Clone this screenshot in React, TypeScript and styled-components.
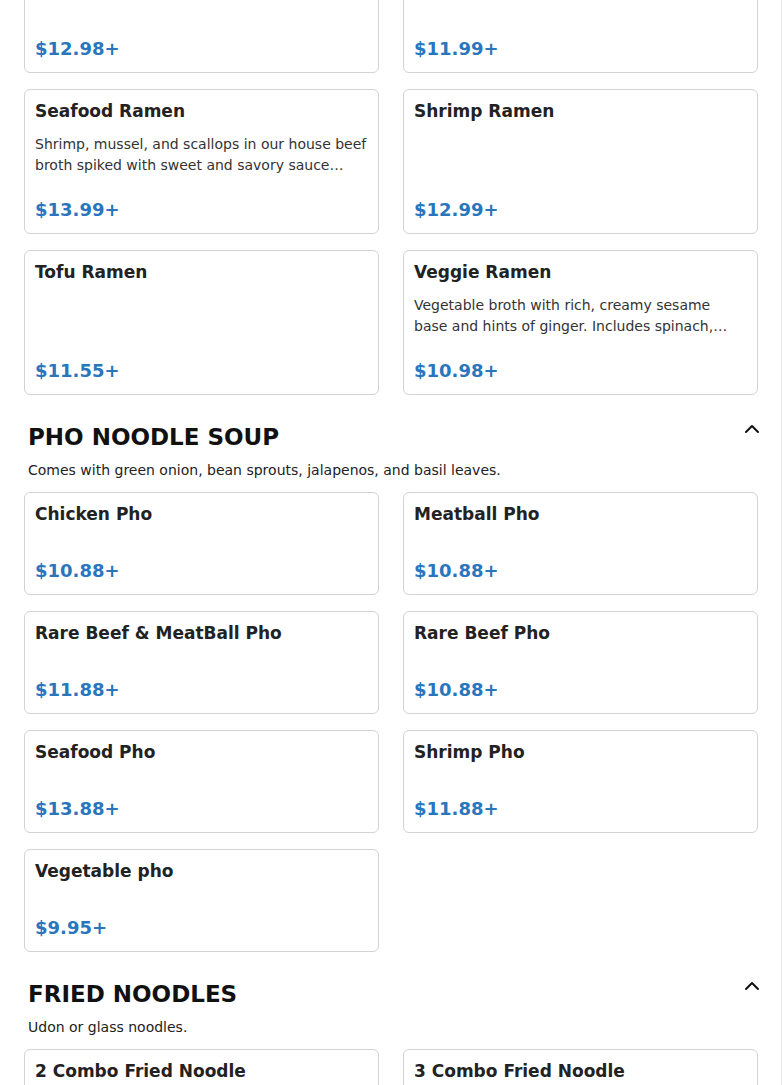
import styled, { createGlobalStyle } from "styled-components";
import { ChevronUp } from "lucide-react";

const GlobalStyle = createGlobalStyle`
  html, body {
    margin: 0;
    padding: 0;
    background: #fff;
    font-family: "DejaVu Sans", "Liberation Sans", sans-serif;
    overflow: hidden;
  }
`;

const Page = styled.main`
  width: 781px;
  height: 1085px;
  border-right: 1px solid #ececec;
  overflow: hidden;
`;

const Scroller = styled.div`
  margin-top: -30px;
  padding: 0 23px 0 24px;
`;

const Section = styled.section<{ $first?: boolean }>`
  margin-top: ${(props) => (props.$first ? "0" : "28px")};
`;

const SectionHeader = styled.div`
  display: flex;
  justify-content: space-between;
  align-items: flex-start;
  padding-left: 4px;
`;

const SectionTitle = styled.h2`
  margin: 0;
  font-size: 23px;
  line-height: 28px;
  font-weight: 700;
  color: #111;
`;

const Toggle = styled.button`
  display: flex;
  border: none;
  background: none;
  padding: 0;
  margin: -6px -6px 0 0;
  color: #111;
  cursor: pointer;
`;

const SectionText = styled.p`
  margin: 9px 0 12px 4px;
  font-size: 14px;
  line-height: 20px;
  color: #222;
`;

const Grid = styled.div`
  display: grid;
  grid-template-columns: 1fr 1fr;
  column-gap: 24px;
  row-gap: 16px;
`;

const Card = styled.div`
  display: flex;
  flex-direction: column;
  min-height: 81px;
  padding: 10px;
  border: 1px solid #d3d3d3;
  border-radius: 6px;
  background: #fff;
`;

const ItemName = styled.h3`
  margin: 0;
  font-size: 17px;
  line-height: 22px;
  font-weight: 700;
  color: #222;
`;

const ItemText = styled.p`
  margin: 12px 0 23px;
  font-size: 14px;
  line-height: 21px;
  color: #333;
  display: -webkit-box;
  -webkit-line-clamp: 2;
  -webkit-box-orient: vertical;
  overflow: hidden;
`;

const Price = styled.div`
  margin-top: auto;
  padding-bottom: 2px;
  font-size: 18px;
  line-height: 22px;
  font-weight: 700;
  color: #2a76bd;
`;

type Item = { name: string; price: string; text?: string };

type Group = { title?: string; text?: string; items: Item[] };

const groups: Group[] = [
  {
    items: [
      { name: "Chicken Ramen", price: "$12.98+" },
      { name: "Beef Ramen", price: "$11.99+" },
      {
        name: "Seafood Ramen",
        price: "$13.99+",
        text: "Shrimp, mussel, and scallops in our house beef broth spiked with sweet and savory sauce accompanied by fresh vegetables.",
      },
      { name: "Shrimp Ramen", price: "$12.99+" },
      { name: "Tofu Ramen", price: "$11.55+" },
      {
        name: "Veggie Ramen",
        price: "$10.98+",
        text: "Vegetable broth with rich, creamy sesame base and hints of ginger. Includes spinach, corn and bean sprouts.",
      },
    ],
  },
  {
    title: "PHO NOODLE SOUP",
    text: "Comes with green onion, bean sprouts, jalapenos, and basil leaves.",
    items: [
      { name: "Chicken Pho", price: "$10.88+" },
      { name: "Meatball Pho", price: "$10.88+" },
      { name: "Rare Beef & MeatBall Pho", price: "$11.88+" },
      { name: "Rare Beef Pho", price: "$10.88+" },
      { name: "Seafood Pho", price: "$13.88+" },
      { name: "Shrimp Pho", price: "$11.88+" },
      { name: "Vegetable pho", price: "$9.95+" },
    ],
  },
  {
    title: "FRIED NOODLES",
    text: "Udon or glass noodles.",
    items: [
      { name: "2 Combo Fried Noodle", price: "$13.99+" },
      { name: "3 Combo Fried Noodle", price: "$15.99+" },
    ],
  },
];

export default function App() {
  return (
    <>
      <GlobalStyle />
      <Page>
        <Scroller>
          {groups.map((group, i) => (
            <Section key={i} $first={!group.title}>
              {group.title && (
                <>
                  <SectionHeader>
                    <SectionTitle>{group.title}</SectionTitle>
                    <Toggle aria-label="Collapse">
                      <ChevronUp size={24} strokeWidth={2} />
                    </Toggle>
                  </SectionHeader>
                  <SectionText>{group.text}</SectionText>
                </>
              )}
              <Grid>
                {group.items.map((item) => (
                  <Card key={item.name}>
                    <ItemName>{item.name}</ItemName>
                    {item.text && <ItemText>{item.text}</ItemText>}
                    <Price>{item.price}</Price>
                  </Card>
                ))}
              </Grid>
            </Section>
          ))}
        </Scroller>
      </Page>
    </>
  );
}
